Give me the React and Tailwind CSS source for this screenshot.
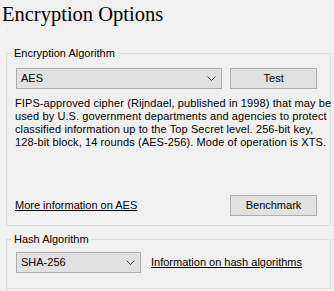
import React from 'react';

const ui = { fontFamily: '"Liberation Sans", Arial, sans-serif' };

function Select({ value, className }) {
  return (
    <div className={`flex items-center justify-between h-[21px] bg-[#e1e1e1] border border-[#adadad] pl-[4px] pr-[5px] text-[11px] text-black ${className}`}>
      <span>{value}</span>
      <svg width="9" height="5" viewBox="0 0 9 5" fill="none" stroke="#3c3c3c" strokeWidth="1">
        <path d="M0.5 0.5 L4.5 4.5 L8.5 0.5" />
      </svg>
    </div>
  );
}

function Button({ children }) {
  return (
    <button className="h-[21px] w-[87px] bg-[#e1e1e1] border border-[#adadad] text-[11px] text-black leading-none">
      {children}
    </button>
  );
}

export default function App() {
  return (
    <div className="w-[334px] h-[291px] bg-[#f0f0f0] overflow-hidden" style={ui}>
      <h1 className="pl-[2px] pt-[2px] h-[26px] text-[20.5px] leading-[24px] text-black" style={{ fontFamily: '"Liberation Serif", serif' }}>
        Encryption Options
      </h1>

      {/* Encryption Algorithm group */}
      <fieldset className="mt-[20px] ml-[6px] w-[325px] min-w-0 h-[180px] border border-[#dcdcdc] pl-[9px] pr-[13px] pt-[7px] pb-[9px] flex flex-col">
        <legend className="-ml-[4px] px-[2px] text-[11px] leading-[15px] text-black">Encryption Algorithm</legend>
        <div className="flex gap-[8px]">
          <Select value="AES" className="w-[207px]" />
          <Button>Test</Button>
        </div>
        <p className="mt-[8px] -ml-[1px] text-[11px] leading-[13px] tracking-[0.1px] text-black whitespace-nowrap">
          FIPS-approved cipher (Rijndael, published in 1998) that may be<br />
          used by U.S. government departments and agencies to protect<br />
          classified information up to the Top Secret level. 256-bit key,<br />
          128-bit block, 14 rounds (AES-256). Mode of operation is XTS.
        </p>
        <div className="mt-auto flex items-center justify-between">
          <a className="-ml-[1px] text-[11px] text-black underline cursor-pointer">More information on AES</a>
          <Button>Benchmark</Button>
        </div>
      </fieldset>

      {/* Hash Algorithm group */}
      <fieldset className="mt-[6px] ml-[6px] w-[325px] min-w-0 h-[57px] border border-[#dcdcdc] pl-[9px] pr-[13px] pt-[5px] flex items-start">
        <legend className="-ml-[4px] px-[2px] text-[11px] leading-[15px] text-black">Hash Algorithm</legend>
        <div className="flex items-center gap-[10px]">
          <Select value="SHA-256" className="w-[125px]" />
          <a className="text-[11px] text-black underline cursor-pointer whitespace-nowrap">Information on hash algorithms</a>
        </div>
      </fieldset>
    </div>
  );
}
